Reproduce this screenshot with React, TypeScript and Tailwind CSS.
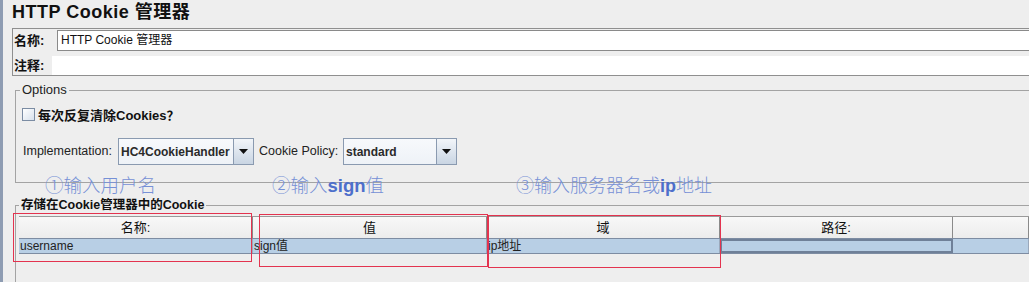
import React from "react";

const font = { fontFamily: '"Liberation Sans", "Noto Sans CJK SC", sans-serif' };
const cjk = { fontFamily: '"Noto Sans CJK SC", sans-serif' };

function Combo({ value, width }: { value: string; width: string }) {
  return (
    <div className={`flex h-[27px] border border-[#8a9ab0] ${width}`}>
      <div className="flex-1 flex items-center pl-[2px] bg-gradient-to-b from-[#f7f9fc] to-[#eef2f7] text-[12px] font-bold text-[#2a2a2a]">
        {value}
      </div>
      <div className="w-[20px] flex items-center justify-center border-l border-[#8a9ab0] bg-gradient-to-b from-[#f2f5f9] to-[#c9d5e3]">
        <svg width="9" height="5" viewBox="0 0 9 5">
          <path d="M0 0 H9 L4.5 5 Z" fill="#111" />
        </svg>
      </div>
    </div>
  );
}

const columns = [
  { title: "名称:", value: "username", w: "w-[234px]" },
  { title: "值", value: "sign值", w: "w-[234px]" },
  { title: "域", value: "ip地址", w: "w-[233px]" },
  { title: "路径:", value: "", w: "w-[233px]" },
  { title: "", value: "", w: "flex-1" },
];

export default function App() {
  return (
    <div
      className="relative w-[1029px] h-[282px] overflow-hidden bg-[#eeeeee] flex text-[#111]"
      style={font}
    >
      <div className="w-[3px] shrink-0 bg-[#8e9cb2]" />
      <div className="flex-1 pl-[9px] flex flex-col">
        <h1 className="h-[28px] pt-[1px] text-[18px] tracking-[0.5px] leading-[22px] font-bold">
          HTTP Cookie 管理器
        </h1>

        <div className="h-[48px] border border-r-0 border-[#8f8f8f] pt-[1px] flex flex-col">
          <div className="h-[21px] flex">
            <span className="w-[44px] pl-[1px] text-[13px] font-bold leading-[21px]">
              名称:
            </span>
            <div className="flex-1 bg-white border-t border-b border-l border-[#8a8a8a] pl-[3px] text-[12px] leading-[19px]">
              HTTP Cookie 管理器
            </div>
          </div>
          <div className="mt-[5px] h-[19px] flex">
            <span className="w-[39px] pl-[1px] text-[13px] font-bold leading-[19px]">
              注释:
            </span>
            <div className="flex-1 bg-white" />
          </div>
        </div>

        <fieldset className="ml-[3px] mt-[7px] h-[100px] border border-r-0 border-[#a3a3a3]">
          <legend className="ml-[4px] px-[2px] text-[13px] leading-[14px] text-[#222]">
            Options
          </legend>
          <div className="mt-[10px] ml-[6px] h-[15px] flex items-center gap-[3px]">
            <div className="w-[13px] h-[13px] border border-[#7b8ca3] bg-gradient-to-br from-white to-[#d8e1ec]" />
            <span className="text-[13px] font-bold leading-[15px]">
              每次反复清除Cookies<span style={cjk}>？</span>
            </span>
          </div>
          <div className="mt-[16px] ml-[7px] flex items-center">
            <span className="text-[12.5px] text-[#222] w-[95px]">
              Implementation:
            </span>
            <Combo value="HC4CookieHandler" width="w-[136px]" />
            <span className="ml-[5px] text-[12.5px] text-[#222] w-[84px]">
              Cookie Policy:
            </span>
            <Combo value="standard" width="w-[114px]" />
          </div>
        </fieldset>

        <fieldset className="ml-[3px] mt-[15px] flex-1 border border-r-0 border-b-0 border-[#a3a3a3]">
          <legend className="ml-[3px] px-[2px] text-[12.5px] font-bold leading-[14px]">
            存储在Cookie管理器中的Cookie
          </legend>
          <div className="ml-[3px] mt-[4px] flex flex-col">
            <div className="flex h-[22px] border-t border-[#9a9a9a] bg-gradient-to-b from-[#f8f8f8] to-[#ececec]">
              {columns.map((c, i) => (
                <div
                  key={i}
                  className={`${c.w} border-r border-[#8a8a8a] flex items-center justify-center text-[13px]`}
                >
                  {c.title}
                </div>
              ))}
            </div>
            <div className="flex h-[16px] bg-[#b8cfe5] border-t border-b border-[#7d8ca2]">
              {columns.map((c, i) => (
                <div
                  key={i}
                  className={`${c.w} ${
                    i === 3 ? "border-2 border-[#6f8098]" : "border-r border-[#9aa8bb]"
                  } flex items-center pl-[1px] text-[12px] leading-[14px] text-[#222]`}
                >
                  {c.value}
                </div>
              ))}
            </div>
          </div>
        </fieldset>
      </div>

      <span className="absolute left-[45px] top-[175px] text-[18.5px] font-light leading-[22px] text-[#7690d6]">
        ①输入用户名
      </span>
      <span className="absolute left-[272px] top-[175px] text-[18.5px] font-light leading-[22px] text-[#7690d6]">
        ②输入<span className="font-bold text-[#4d6fcb]">sign</span>值
      </span>
      <span className="absolute left-[516px] top-[175px] text-[18px] font-light leading-[22px] text-[#7690d6]">
        ③输入服务器名或<span className="font-bold text-[#4d6fcb]">ip</span>地址
      </span>

      <div className="absolute left-[13px] top-[213px] w-[239px] h-[49px] border border-[#e3334f]" />
      <div className="absolute left-[259px] top-[214px] w-[229px] h-[53px] border border-[#e3334f]" />
      <div className="absolute left-[488px] top-[215px] w-[233px] h-[53px] border border-[#e3334f]" />
    </div>
  );
}
